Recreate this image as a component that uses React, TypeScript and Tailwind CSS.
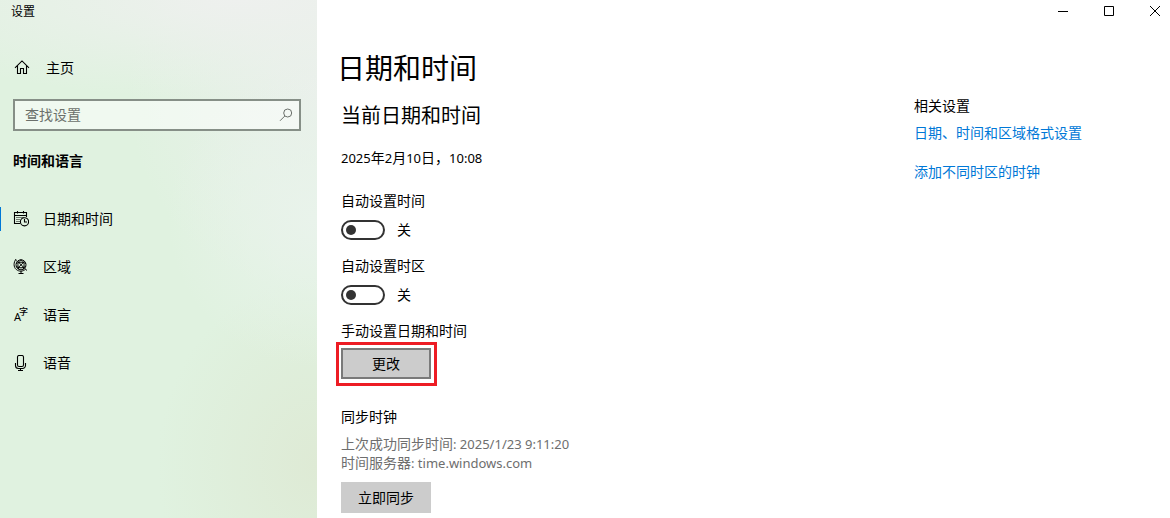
import React, { useState } from 'react';

const HomeIcon = () => (
  <svg viewBox="0 0 16 16" className="size-4" fill="none" stroke="currentColor" strokeWidth="1.1">
    <path d="M1 7.8 8 .9l7 6.900M3.500 5.500v8h3V8.500h3v5h3v-8" />
  </svg>
);

const SearchIcon = () => (
  <svg viewBox="0 0 14 14" className="size-[14px]" fill="none" stroke="currentColor" strokeWidth="1">
    <circle cx="8.7" cy="5" r="4" />
    <path d="M5.8 8 1 12.8" />
  </svg>
);

const CalendarIcon = () => (
  <svg viewBox="0 0 16 16" className="size-4" fill="none" stroke="currentColor" strokeWidth="1.1">
    <path d="M7 12.5H1.5v-11h12V6M1.5 4.500h12M4.500 0v2.500M10.500 0v2.500" />
    <path d="M3.500 6.500h1M5.500 6.500h1M7.500 6.500h1M9.500 6.500h1M3.500 8.500h1M5.500 8.500h1M3.500 10.500h1M5.500 10.500h1" />
    <circle cx="11.5" cy="10.8" r="4.1" />
    <path d="M11.500 8v3h2.500" />
  </svg>
);

const GlobeIcon = () => (
  <svg viewBox="0 0 16 16" className="size-4" fill="none" stroke="currentColor" strokeWidth="1">
    <circle cx="8" cy="5.800" r="5" />
    <path d="M4.600 2.200 11.500 9.300M11.500 2.300 4.500 9.400M8 .8C5 2.700 4 5.500 5.800 10.300M8 .8c3 1.900 4 4.700 2.200 9.500M3.200 4.500c3-1.800 6.600-1.800 9.600 0M3.200 7.500c3 1.800 6.600 1.800 9.600 0" />
    <path d="M3 .3C.4 3.100.4 8.300 3.300 10.500c2.800 2.300 6.600 2.200 9.200-.3M2.200.5l1.600 1.600M11.800 9.500l2.200 2M8 12v2.500M5.500 14.500h5" />
  </svg>
);

const LanguageIcon = () => (
  <svg viewBox="0 0 16 16" className="size-4 overflow-visible" fill="currentColor">
    <text x="1" y="14" fontSize="11">A</text>
    <text x="6" y="8" fontSize="9" fontWeight="500">字</text>
  </svg>
);

const MicIcon = () => (
  <svg viewBox="0 0 16 16" className="size-4" fill="none" stroke="currentColor" strokeWidth="1.1">
    <rect x="4.500" y=".5" width="6" height="11" rx="1.500" />
    <path d="M2.500 8v2.500a3 3 0 0 0 3 3h4a3 3 0 0 0 3-3V8M7.500 13.500v2M5 15.500h5" />
  </svg>
);

const navItems = [
  { label: '日期和时间', icon: CalendarIcon },
  { label: '区域', icon: GlobeIcon },
  { label: '语言', icon: LanguageIcon },
  { label: '语音', icon: MicIcon },
];

// latin text runs a size smaller than the chinese around it
const Latin: React.FC<{ children: React.ReactNode }> = ({ children }) => (
  <span className="text-[13px] leading-none">{children}</span>
);

const Toggle: React.FC<{ id: string; label: string }> = ({ id, label }) => {
  const [on, setOn] = useState(false);

  return (
    <div>
      <label htmlFor={id} className="block">{label}</label>
      <div className="mt-[9px] flex h-5 items-center gap-3">
        <input
          id={id}
          type="checkbox"
          role="switch"
          checked={on}
          onChange={(e) => setOn(e.target.checked)}
          className="flex h-5 w-11 appearance-none items-center rounded-full border-2 border-[#333] px-[3px] before:size-[10px] before:rounded-full before:bg-[#333] checked:justify-end checked:border-[#0078d7] checked:bg-[#0078d7] checked:before:bg-white"
        />
        <span>{on ? '开' : '关'}</span>
      </div>
    </div>
  );
};

const Sidebar = () => {
  const [active, setActive] = useState('日期和时间');

  return (
    <aside className="w-[317px] shrink-0 bg-[#e0f2e0] bg-[radial-gradient(ellipse_150px_150px_at_100%_42%,#e9f3eb,#e9f3eb00),radial-gradient(ellipse_160px_190px_at_100%_90%,#deead5,#deead500),radial-gradient(ellipse_380px_100px_at_75%_0%,#eef0ee,#eef0ee00),radial-gradient(ellipse_190px_200px_at_100%_18%,#eaf0eb,#eaf0eb00)]">
      <div className="flex h-6 items-center pl-[11px] text-xs">设置</div>
      <a href="#home" className="mt-5 flex h-12 items-center gap-4 pl-[14px]">
        <HomeIcon />
        主页
      </a>
      <div className="mx-[13px] mt-[7px] flex h-8 w-[288px] items-center border-2 border-[#868f87] bg-white/50 pr-[6px] text-[#6b706b]">
        <input
          type="text"
          aria-label="查找设置"
          placeholder="查找设置"
          className="min-w-0 flex-1 bg-transparent pl-[10px] outline-none placeholder:text-[#6b706b]"
        />
        <button aria-label="搜索">
          <SearchIcon />
        </button>
      </div>
      <h2 className="mt-5 pl-[13px] font-bold">时间和语言</h2>
      <nav className="mt-6">
        {navItems.map(({ label, icon: Icon }) => (
          <button
            key={label}
            onClick={() => setActive(label)}
            className="flex h-12 w-full items-center text-left"
          >
            <span className={active === label ? 'h-6 w-px bg-[#0078d7]' : 'h-6 w-px'} />
            <span className="mr-[14px] ml-3">
              <Icon />
            </span>
            {label}
          </button>
        ))}
      </nav>
    </aside>
  );
};

const WindowControls = () => (
  <div className="flex h-[22px] items-center justify-end gap-9 pr-[10px]">
    <button aria-label="最小化">
      <svg viewBox="0 0 10 10" className="size-[10px]" stroke="currentColor">
        <path d="M0 5.500h10" />
      </svg>
    </button>
    <button aria-label="最大化">
      <svg viewBox="0 0 10 10" className="size-[10px]" fill="none" stroke="currentColor">
        <path d="M.5.5h9v9h-9z" />
      </svg>
    </button>
    <button aria-label="关闭">
      <svg viewBox="0 0 10 10" className="size-[10px]" stroke="currentColor">
        <path d="m0 0 10 10M10 0 0 10" />
      </svg>
    </button>
  </div>
);

const DateTimeSettings = () => (
  <main className="flex-1 pl-5">
    <h1 className="text-[28px] leading-9">日期和时间</h1>
    <div className="pl-1">
      <h2 className="mt-4 text-xl leading-7">当前日期和时间</h2>
      <p className="mt-[18px]">
        <Latin>2025</Latin>年<Latin>2</Latin>月<Latin>10</Latin>日，<Latin>10:08</Latin>
      </p>
      <div className="mt-[23px] flex flex-col gap-4">
        <Toggle id="auto-time" label="自动设置时间" />
        <Toggle id="auto-zone" label="自动设置时区" />
      </div>
      <p className="mt-4">手动设置日期和时间</p>
      <div className="relative mt-[7px] w-[90px]">
        <button className="block h-[31px] w-full border-2 border-[#7a7a7a] bg-[#ccc]">更改</button>
        <span className="pointer-events-none absolute -top-[6px] -right-[6px] -bottom-[7px] -left-[5px] border-3 border-[#ed1c24]" />
      </div>
      <h3 className="mt-7">同步时钟</h3>
      <div className="mt-[7px] leading-[19px] text-[#6e6e6e]">
        <p>上次成功同步时间<Latin>: 2025/1/23 9:11:20</Latin></p>
        <p>时间服务器<Latin>: time.windows.com</Latin></p>
      </div>
      <button className="mt-[10px] mb-[5px] block h-[31px] w-[90px] bg-[#ccc]">立即同步</button>
    </div>
  </main>
);

const RelatedSettings = () => (
  <section className="w-64 shrink-0 pt-[46px]">
    <h3>相关设置</h3>
    <a href="#formats" className="mt-[7px] block text-[#0078d7]">日期、时间和区域格式设置</a>
    <a href="#clocks" className="mt-[19px] block text-[#0078d7]">添加不同时区的时钟</a>
  </section>
);

const App = () => {
  return (
    <div className="flex min-h-screen bg-white font-['Noto_Sans','Noto_Sans_CJK_SC',sans-serif] text-sm leading-5 text-black">
      <Sidebar />
      <div className="flex-1">
        <WindowControls />
        <div className="flex pt-7">
          <DateTimeSettings />
          <RelatedSettings />
        </div>
      </div>
    </div>
  );
};

export default App;
